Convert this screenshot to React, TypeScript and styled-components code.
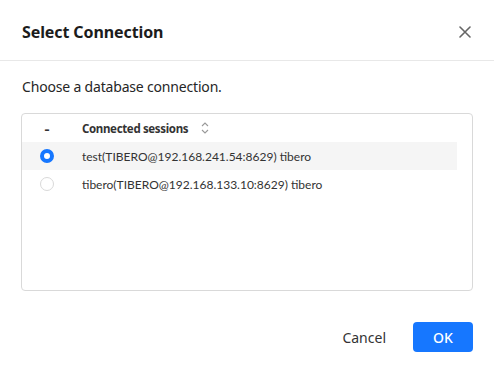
import styled, { createGlobalStyle } from "styled-components";

const GlobalStyle = createGlobalStyle`
  html, body { margin: 0; padding: 0; background: #fff; }
  body { font-family: "Noto Sans", "Open Sans", sans-serif; color: #1f1f1f; }
`;

const sessions = [
  { id: "test", label: "test(TIBERO@192.168.241.54:8629) tibero" },
  { id: "tibero", label: "tibero(TIBERO@192.168.133.10:8629) tibero" },
];

export default function App() {
  const selected = "test";
  return (
    <>
      <GlobalStyle />
      <Dialog>
        <Header>
          <Title>Select Connection</Title>
          <CloseButton type="button" aria-label="close">
            <svg width="12" height="12" viewBox="0 0 12 12">
              <path d="M1 1 L11 11 M11 1 L1 11" stroke="#666" strokeWidth="1.6" strokeLinecap="round" />
            </svg>
          </CloseButton>
        </Header>
        <Body>
          <Prompt>Choose a database connection.</Prompt>
          <TableBox>
            <HeadRow>
              <SelectCell>-</SelectCell>
              <HeadLabel>
                Connected sessions
                <svg width="10" height="14" viewBox="0 0 10 14">
                  <path d="M2 5 L5 2 L8 5 M2 9 L5 12 L8 9" fill="none" stroke="#999" strokeWidth="1.1" />
                </svg>
              </HeadLabel>
            </HeadRow>
            {sessions.map((s) => (
              <Row key={s.id} $active={s.id === selected}>
                <SelectCell>
                  <Radio $checked={s.id === selected} />
                </SelectCell>
                <Cell>{s.label}</Cell>
              </Row>
            ))}
          </TableBox>
        </Body>
        <Footer>
          <TextButton type="button">Cancel</TextButton>
          <PrimaryButton type="button">OK</PrimaryButton>
        </Footer>
      </Dialog>
    </>
  );
}

const Dialog = styled.div`
  width: 494px;
  height: 378px;
  display: flex;
  flex-direction: column;
  background: #fff;
`;

const Header = styled.div`
  height: 61px;
  box-sizing: border-box;
  display: flex;
  align-items: center;
  justify-content: space-between;
  padding: 3px 23px 0 22px;
  border-bottom: 1px solid #e8e8e8;
`;

const Title = styled.h1`
  margin: 0;
  font-size: 16px;
  font-weight: 700;
  color: #1c1c1c;
  letter-spacing: -0.1px;
`;

const CloseButton = styled.button`
  border: 0;
  background: none;
  padding: 0;
  display: flex;
  cursor: pointer;
`;

const Body = styled.div`
  padding: 16px 21px 0 21px;
`;

const Prompt = styled.p`
  margin: 0 0 16px 1px;
  font-size: 14px;
  letter-spacing: -0.18px;
  color: #262626;
  line-height: 20px;
`;

const TableBox = styled.div`
  height: 178px;
  box-sizing: border-box;
  border: 1px solid #d9d9d9;
  border-radius: 4px;
  padding: 0 15px 0 0;
  font-family: Lato, "Noto Sans", sans-serif;
`;

const HeadRow = styled.div`
  display: flex;
  align-items: center;
  height: 28px;
`;

const SelectCell = styled.div`
  width: 50px;
  display: flex;
  justify-content: center;
  align-items: center;
  font-weight: 700;
  color: #333;
`;

const HeadLabel = styled.div`
  display: flex;
  align-items: center;
  gap: 12px;
  padding-left: 10px;
  font-family: "Noto Sans", sans-serif;
  font-size: 11.5px;
  letter-spacing: -0.35px;
  font-weight: 700;
  color: #333;
`;

const Row = styled.div<{ $active: boolean }>`
  display: flex;
  align-items: center;
  height: 28px;
  background: ${(p) => (p.$active ? "#f5f5f5" : "transparent")};
`;

const Cell = styled.div`
  padding-left: 10px;
  font-size: 12px;
  color: #333;
`;

const Radio = styled.span<{ $checked: boolean }>`
  width: 14px;
  height: 14px;
  box-sizing: border-box;
  border-radius: 50%;
  background: #fff;
  border: ${(p) => (p.$checked ? "4px solid #1677ff" : "1px solid #d9d9d9")};
`;

const Footer = styled.div`
  margin-top: auto;
  height: 56px;
  display: flex;
  align-items: flex-start;
  justify-content: flex-end;
  gap: 12px;
  padding-right: 21px;
`;

const TextButton = styled.button`
  border: 0;
  background: none;
  height: 30px;
  padding: 0 15px;
  font-family: "Noto Sans", sans-serif;
  font-size: 14px;
  color: #333;
  cursor: pointer;
`;

const PrimaryButton = styled.button`
  border: 0;
  width: 60px;
  height: 30px;
  border-radius: 4px;
  background: #1677ff;
  color: #fff;
  font-family: "Noto Sans", sans-serif;
  font-size: 14px;
  font-weight: 500;
  cursor: pointer;
`;
